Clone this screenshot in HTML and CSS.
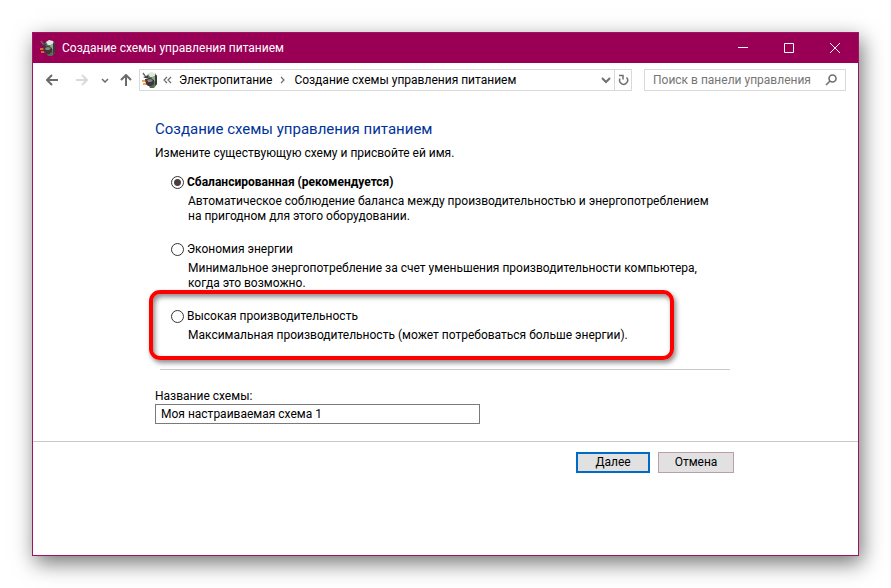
FILE: index.html
```html
<!DOCTYPE html>
<html lang="ru">
<head>
   <meta charset="UTF-8">
   <meta name="viewport" content="width=device-width, initial-scale=1.0">
   <title>Создание схемы управления питанием</title>
   <link rel="stylesheet" href="styles.css">
</head>

<body>
   <!-- значок электропитания, общий для заголовка и адресной строки -->
   <svg width="0" height="0" class="defs">
      <symbol id="power" viewBox="0 0 17 17">
         <path d="M1 1l2 3 3 1" stroke="#5e7360" stroke-width="1.4" fill="none" />
         <path d="M5 3l3-2h5l2 3v8l-3 4H8l-1-3z" fill="#587a5c" />
         <path d="M6 2l3-2 4 1 1 2-3 2H8z" fill="#dfe8df" />
         <path d="M10 5l3-1v5l-2 1z" fill="#8dab8f" />
         <path d="M13 2l2 2v8l-2 2z" fill="#2f4232" />
         <path d="M7 13l5-1-1 4H8z" fill="#4d6b50" />
         <path d="M0 9h5M1 12h5" stroke="#f08a24" stroke-width="1.6" />
         <path d="M3 7l5-1 4 2v4l-3 2H6l-2-2z" fill="#3f373a" />
         <path d="M5 8l3-1 3 1-2 2H6z" fill="#8f8589" />
         <path d="M1 5l5-1v2H3z" fill="#403a3c" />
      </symbol>
   </svg>

   <main class="window">
      <header class="titlebar">
         <svg class="power-icon"><use href="#power" /></svg>
         <span class="title">Создание схемы управления питанием</span>
         <button class="caption-btn" aria-label="Свернуть">
            <svg width="10" height="10"><path d="M0 4.5h10" /></svg>
         </button>
         <button class="caption-btn" aria-label="Развернуть">
            <svg width="10" height="10"><path d="M.5.5h9v9h-9z" /></svg>
         </button>
         <button class="caption-btn" aria-label="Закрыть">
            <svg width="10" height="10"><path d="M0 0l10 10M10 0L0 10" /></svg>
         </button>
      </header>

      <nav class="toolbar">
         <button class="nav-btn" aria-label="Назад">
            <svg width="12" height="12"><path d="M12 6H1M6 1L1 6l5 5" /></svg>
         </button>
         <button class="nav-btn" aria-label="Вперед" disabled>
            <svg width="12" height="12"><path d="M0 6h11M6 1l5 5-5 5" /></svg>
         </button>
         <button class="nav-btn nav-btn-small" aria-label="Последние расположения">
            <svg width="8" height="5"><path d="M1 1l3 3 3-3" /></svg>
         </button>
         <button class="nav-btn nav-btn-up" aria-label="Вверх">
            <svg width="12" height="12"><path d="M6 12V1M1 6l5-5 5 5" /></svg>
         </button>

         <div class="address">
            <svg class="power-icon"><use href="#power" /></svg>
            <svg class="sep" width="9" height="8"><path d="M4 1L1 4l3 3M8 1L5 4l3 3" /></svg>
            <a class="crumb" href="#">Электропитание</a>
            <svg class="sep" width="6" height="8"><path d="M1 1l3 3-3 3" /></svg>
            <a class="crumb" href="#">Создание схемы управления питанием</a>
            <button class="address-btn address-drop" aria-label="Предыдущие расположения">
               <svg width="10" height="7"><path d="M1 1l4 4 4-4" /></svg>
            </button>
            <button class="address-btn address-refresh" aria-label="Обновить">
               <svg width="11" height="12"><path d="M8.5 3.5A4 4 0 1 1 2 4.5M1 1.5h4v4" /></svg>
            </button>
         </div>

         <div class="search">
            <input type="text" aria-label="Поиск" placeholder="Поиск в панели управления">
            <svg width="12" height="12"><circle cx="7.5" cy="4.5" r="3.5" /><path d="M5 7l-4 4" /></svg>
         </div>
      </nav>

      <form class="content">
         <h1>Создание схемы управления питанием</h1>
         <p class="lead">Измените существующую схему и присвойте ей имя.</p>

         <div class="option">
            <input type="radio" name="plan" id="balanced" checked>
            <label for="balanced" class="recommended">Сбалансированная (рекомендуется)</label>
            <p>Автоматическое соблюдение баланса между производительностью и энергопотреблением<br>
               на пригодном для этого оборудовании.</p>
         </div>

         <div class="option">
            <input type="radio" name="plan" id="saver">
            <label for="saver">Экономия энергии</label>
            <p>Минимальное энергопотребление за счет уменьшения производительности компьютера,<br>
               когда это возможно.</p>
         </div>

         <div class="option marked">
            <input type="radio" name="plan" id="high">
            <label for="high">Высокая производительность</label>
            <p>Максимальная производительность (может потребоваться больше энергии).</p>
         </div>

         <hr>

         <label for="plan-name" class="name-label">Название схемы:</label>
         <input type="text" id="plan-name" class="plan-name" value="Моя настраиваемая схема 1">
      </form>

      <footer class="buttons">
         <button class="btn btn-default">Далее</button>
         <button class="btn btn-cancel">Отмена</button>
      </footer>
   </main>
</body>
</html>
```
FILE: styles.css
```css
* {
   box-sizing: border-box;
}

body {
   margin: 0;
   padding: 32px;
   min-height: 100vh;
   display: flex;
   background: #fff;
   color: #000;
   font: 12px/15px Roboto, "Open Sans", sans-serif;
}

h1,
p {
   margin: 0;
}

button,
input {
   font: inherit;
   color: inherit;
}

button {
   border: 0;
   padding: 0;
   background: none;
   display: flex;
   align-items: center;
   justify-content: center;
}

svg {
   flex: none;
   fill: none;
}

.defs {
   position: absolute;
}

.window {
   flex: 1;
   min-width: 0;
   background: #fff;
   border: 1px solid #9b1563;
   box-shadow: 3px 7px 20px rgba(0, 0, 0, 0.55);
}

.power-icon {
   width: 17px;
   height: 17px;
}

/* заголовок окна */
.titlebar {
   display: flex;
   align-items: center;
   height: 30px;
   padding-left: 7px;
   background: #990055;
   color: #fff;
}

.title {
   flex: 1;
   padding-left: 5px;
   white-space: nowrap;
}

.caption-btn {
   width: 46px;
   height: 30px;
}

.caption-btn svg {
   stroke: #fff;
}

/* панель навигации */
.toolbar {
   display: flex;
   align-items: center;
   padding: 6px 12px;
   white-space: nowrap;
}

.nav-btn {
   width: 14px;
   height: 22px;
   margin-right: 16px;
}

.nav-btn svg {
   stroke: #6b6b6b;
   stroke-width: 2;
}

.nav-btn:disabled svg {
   stroke: #d9d9d9;
}

.nav-btn-small {
   width: 8px;
   margin: 0 8px 0 -4px;
}

.nav-btn-small svg {
   stroke-width: 1.5;
}

.nav-btn-up {
   margin: 0 6px 0 2px;
}

.address {
   flex: 1;
   display: flex;
   align-items: center;
   height: 22px;
   margin-right: 12px;
   padding-left: 2px;
   border: 1px solid #d9d9d9;
}

.sep {
   margin: 0 7px 0 4px;
   stroke: #6b6b6b;
   stroke-width: 1.2;
}

.crumb {
   color: #000;
   text-decoration: none;
}

.crumb + .sep {
   margin: 0 8px;
}

.address-btn {
   width: 17px;
   height: 20px;
}

.address-btn svg {
   stroke: #707070;
   stroke-width: 2;
}

.address-drop {
   margin-left: auto;
}

.address-refresh {
   border-left: 1px solid #d9d9d9;
}

.address-refresh svg {
   stroke-width: 1.5;
}

.search {
   display: flex;
   align-items: center;
   width: 202px;
   height: 22px;
   padding: 0 8px;
   border: 1px solid #d9d9d9;
}

.search input {
   flex: 1;
   min-width: 0;
   padding: 0;
   border: 0;
   background: none;
}

.search input::placeholder {
   color: #757575;
}

.search svg {
   stroke: #707070;
   stroke-width: 1.6;
}

/* содержимое */
.content {
   padding: 21px 128px 17px 122px;
}

h1 {
   color: #003399;
   font-size: 15px;
   font-weight: normal;
   line-height: 22px;
}

.lead {
   margin: 5px 0 13px;
   line-height: 16px;
}

.option {
   position: relative;
   display: grid;
   grid-template-columns: 13px 1fr;
   column-gap: 3px;
   row-gap: 4px;
   align-items: center;
   margin: 0 0 17px 16px;
   line-height: 16px;
}

.option input {
   appearance: none;
   width: 13px;
   height: 13px;
   margin: 0;
   border: 1px solid #333;
   border-radius: 50%;
   background: #fff;
}

.option input:checked {
   background: radial-gradient(circle, #4a3f3f 3px, #fff 4px);
}

.option p {
   grid-column: 2;
   padding-left: 1px;
   line-height: 15px;
   white-space: nowrap;
}

.recommended {
   font-weight: bold;
}

/* красная рамка вокруг нужного пункта */
.marked::after {
   content: "";
   position: absolute;
   inset: -18px 56px -17px -22px;
   border: 4px solid #f00;
   border-radius: 11px;
   box-shadow: 2px 3px 5px rgba(0, 0, 0, 0.45), inset 2px 3px 5px rgba(0, 0, 0, 0.45);
   pointer-events: none;
}

hr {
   margin: 26px 0 19px 5px;
   border: 0;
   border-top: 1px solid #c8c8c8;
}

.name-label {
   display: block;
}

.plan-name {
   display: block;
   width: 325px;
   height: 20px;
   padding: 0 5px;
   border: 1px solid #7a7a7a;
   background: #fff;
}

/* нижняя панель */
.buttons {
   display: flex;
   justify-content: flex-end;
   gap: 8px;
   padding: 10px 124px 10px 0;
   border-top: 1px solid #c8c8c8;
}

.btn {
   height: 21px;
   background: #e1e1e1;
}

.btn-default {
   width: 74px;
   border: 2px solid #006bc6;
}

.btn-cancel {
   width: 76px;
   border: 1px solid #bb9dab;
}
```
